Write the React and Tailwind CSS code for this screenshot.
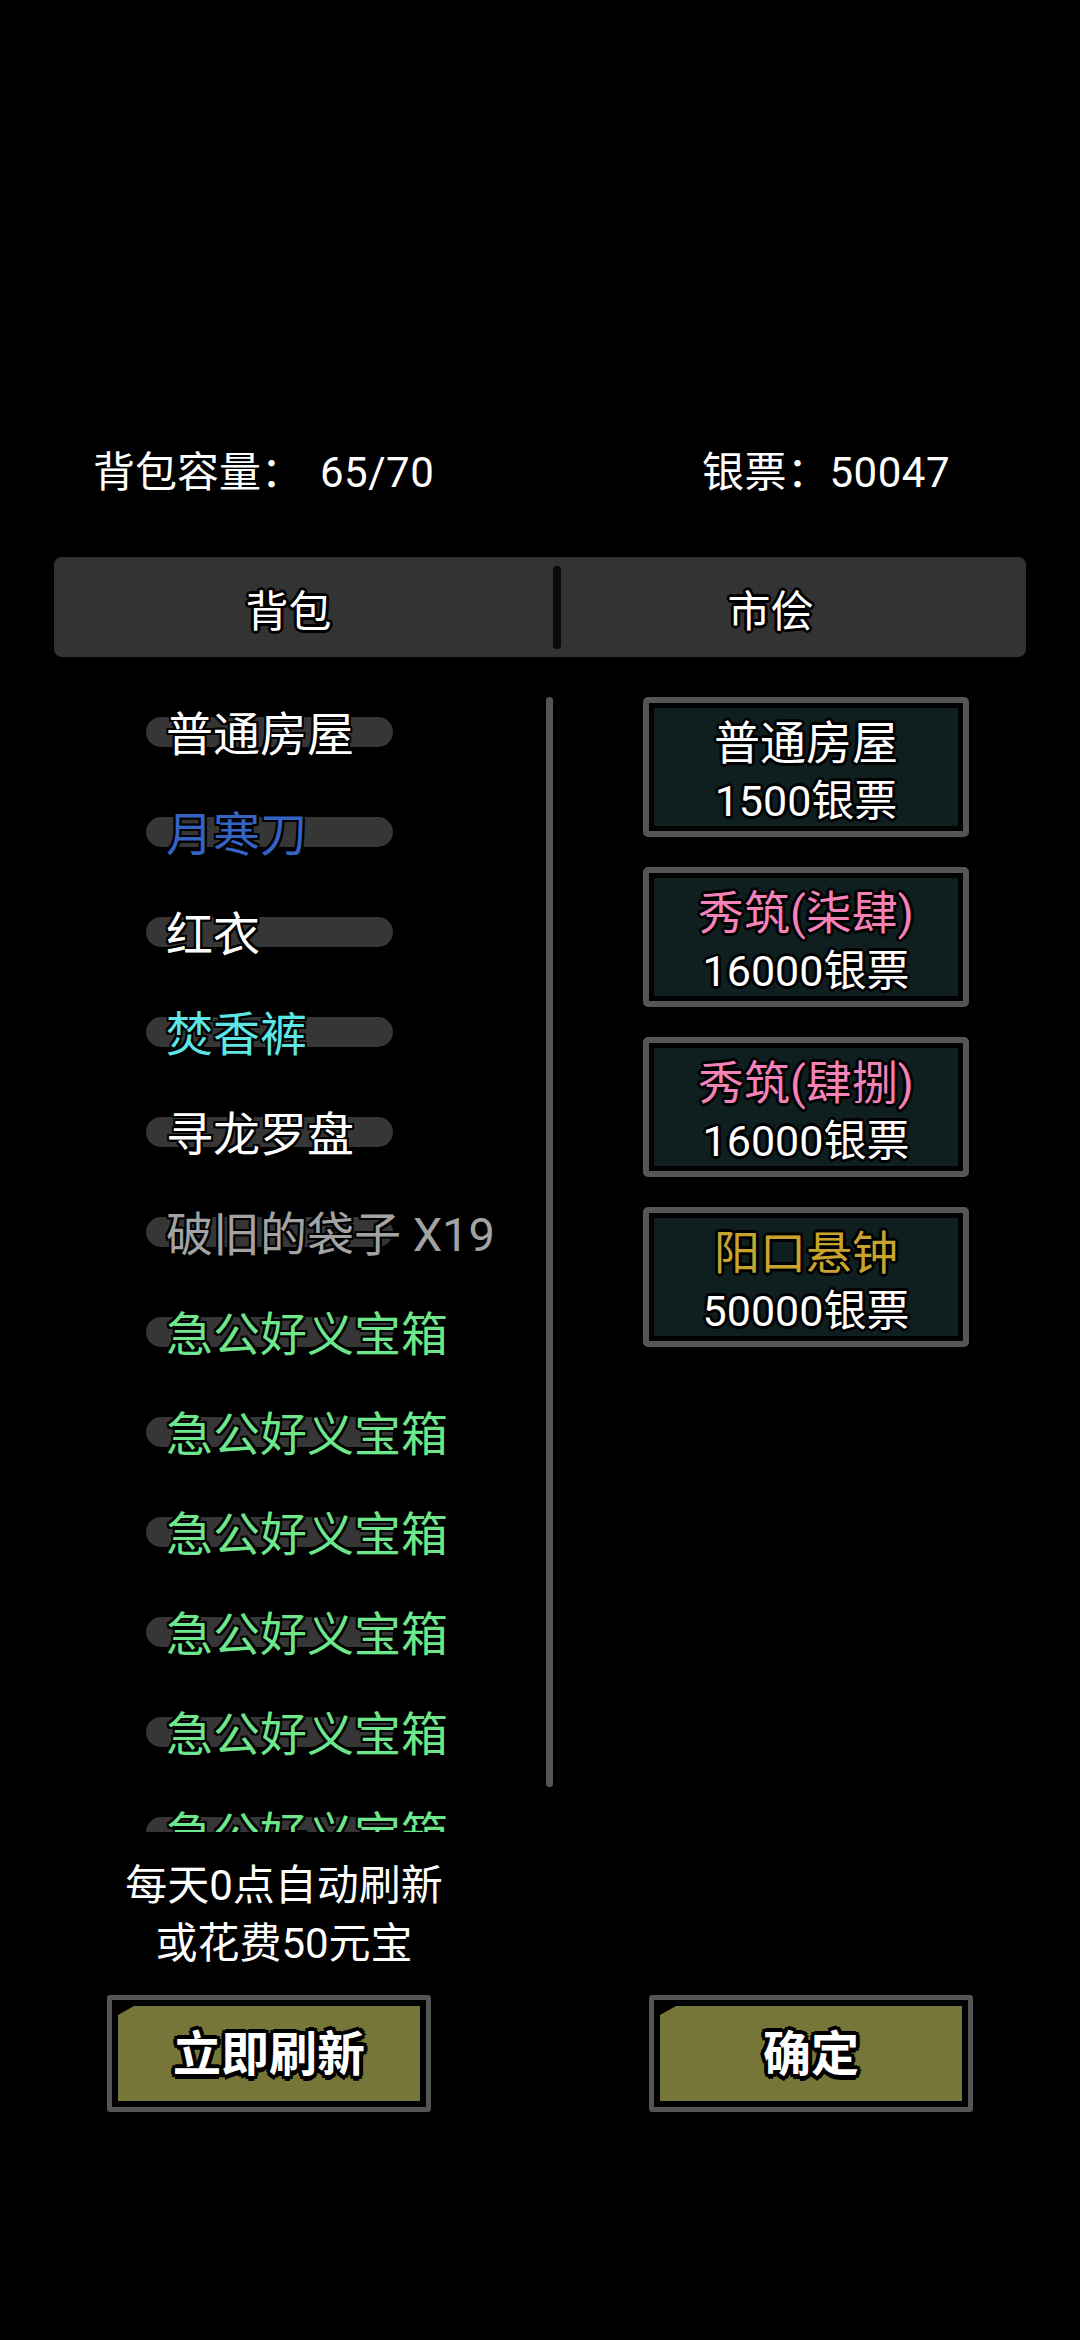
const OUT2 =
  "[text-shadow:-2px_0_0_#000,2px_0_0_#000,0_-2px_0_#000,0_2px_0_#000,-2px_-2px_0_#000,2px_-2px_0_#000,-2px_2px_0_#000,2px_2px_0_#000]";
const OUT3 =
  "[text-shadow:-3px_0_0_#000,3px_0_0_#000,0_-3px_0_#000,0_3px_0_#000,-2px_-2px_0_#000,2px_-2px_0_#000,-2px_2px_0_#000,2px_2px_0_#000]";
const OUT4 =
  "[text-shadow:-4px_0_0_#000,4px_0_0_#000,0_-4px_0_#000,0_4px_0_#000,-3px_-3px_0_#000,3px_-3px_0_#000,-3px_3px_0_#000,3px_3px_0_#000,0_5px_0_#000]";

const items = [
  ["普通房屋", "text-white"],
  ["月寒刀", "text-[#3563c4]"],
  ["红衣", "text-white"],
  ["焚香裤", "text-[#5de6e6]"],
  ["寻龙罗盘", "text-white"],
  ["破旧的袋子 X19", "text-[#a3a3a3]"],
  ["急公好义宝箱", "text-[#6ee68c]"],
  ["急公好义宝箱", "text-[#6ee68c]"],
  ["急公好义宝箱", "text-[#6ee68c]"],
  ["急公好义宝箱", "text-[#6ee68c]"],
  ["急公好义宝箱", "text-[#6ee68c]"],
  ["急公好义宝箱", "text-[#6ee68c]"],
];

const cards = [
  ["普通房屋", "text-white", "1500银票"],
  ["秀筑(柒肆)", "text-[#f282b8]", "16000银票"],
  ["秀筑(肆捌)", "text-[#f282b8]", "16000银票"],
  ["阳口悬钟", "text-[#c8a42e]", "50000银票"],
];

function GameButton({ label }) {
  return (
    <div className="w-[324px] h-[117px] border-[5px] border-[#555555] rounded-[3px] bg-black p-[6px]">
      <div className="w-full h-full bg-[#767639] [clip-path:polygon(16px_0,100%_0,100%_100%,0_100%,0_9px)] flex items-center justify-center pt-[2px]">
        <span className={`text-[48px] leading-none font-bold text-white ${OUT4}`}>{label}</span>
      </div>
    </div>
  );
}

export default function App() {
  return (
    <div className="min-h-[2340px] w-[1080px] bg-black text-white font-['Roboto','Noto_Sans_CJK_SC',sans-serif] pt-[443px]">
      {/* header */}
      <div className="flex h-[60px] items-center text-[42px] leading-[60px] text-white">
        <div className="w-[702px] pl-[93px] flex">
          <span>背包容量：</span>
          <span className="ml-[17px] tracking-[0.5px]">65/70</span>
        </div>
        <span className="tracking-[0.5px]">银票：50047</span>
      </div>

      {/* tabs */}
      <div className="mt-[54px] mx-[54px] h-[100px] bg-[#333333] rounded-[8px] flex items-center">
        <div className="w-[499px] pr-[30px] flex justify-center items-center h-full pt-[10px]">
          <span className={`text-[43px] leading-none text-white ${OUT3}`}>背包</span>
        </div>
        <div className="w-[8px] h-[83px] bg-[#0a0a0a] rounded-full"></div>
        <div className="flex-1 pr-[46px] flex justify-center items-center h-full pt-[10px]">
          <span className={`text-[43px] leading-none text-white ${OUT3}`}>市侩</span>
        </div>
      </div>

      {/* body */}
      <div className="mt-[25px] flex h-[1150px]">
        <div className="w-[546px] h-[1150px] overflow-hidden">
          {items.map(([name, color], i) => (
            <div key={i} className="relative h-[100px] pl-[166px] flex items-center">
              <div className="absolute left-[146px] top-[35px] w-[247px] h-[30px] rounded-full bg-[#363636]"></div>
              <span className={`relative mt-[6px] text-[47px] leading-[94px] whitespace-nowrap ${color} ${OUT2}`}>{name}</span>
            </div>
          ))}
        </div>
        <div className="w-[7px] mt-[15px] h-[1090px] rounded-full bg-[#555555]"></div>
        <div className="ml-[90px] mt-[15px] flex flex-col gap-[30px]">
          {cards.map(([name, color, price], i) => (
            <div key={i} className="w-[326px] h-[140px] border-[6px] border-[#555555] rounded-[5px] bg-black p-[5px]">
              <div className="w-full h-full bg-[#0f1f1f] flex flex-col items-center pt-[6px]">
                <span className={`text-[46px] leading-[58px] whitespace-nowrap ${color} ${OUT3}`}>{name}</span>
                <span className={`text-[43px] leading-[59px] whitespace-nowrap text-white ${OUT3}`}>{price}</span>
              </div>
            </div>
          ))}
        </div>
      </div>

      {/* hint */}
      <div className="mt-[25px] w-[568px] flex flex-col items-center text-[42px] leading-[58px] text-white">
        <span>每天0点自动刷新</span>
        <span>或花费50元宝</span>
      </div>

      {/* buttons */}
      <div className="mt-[22px] flex">
        <div className="ml-[107px]">
          <GameButton label="立即刷新" />
        </div>
        <div className="ml-[218px]">
          <GameButton label="确定" />
        </div>
      </div>
    </div>
  );
}
